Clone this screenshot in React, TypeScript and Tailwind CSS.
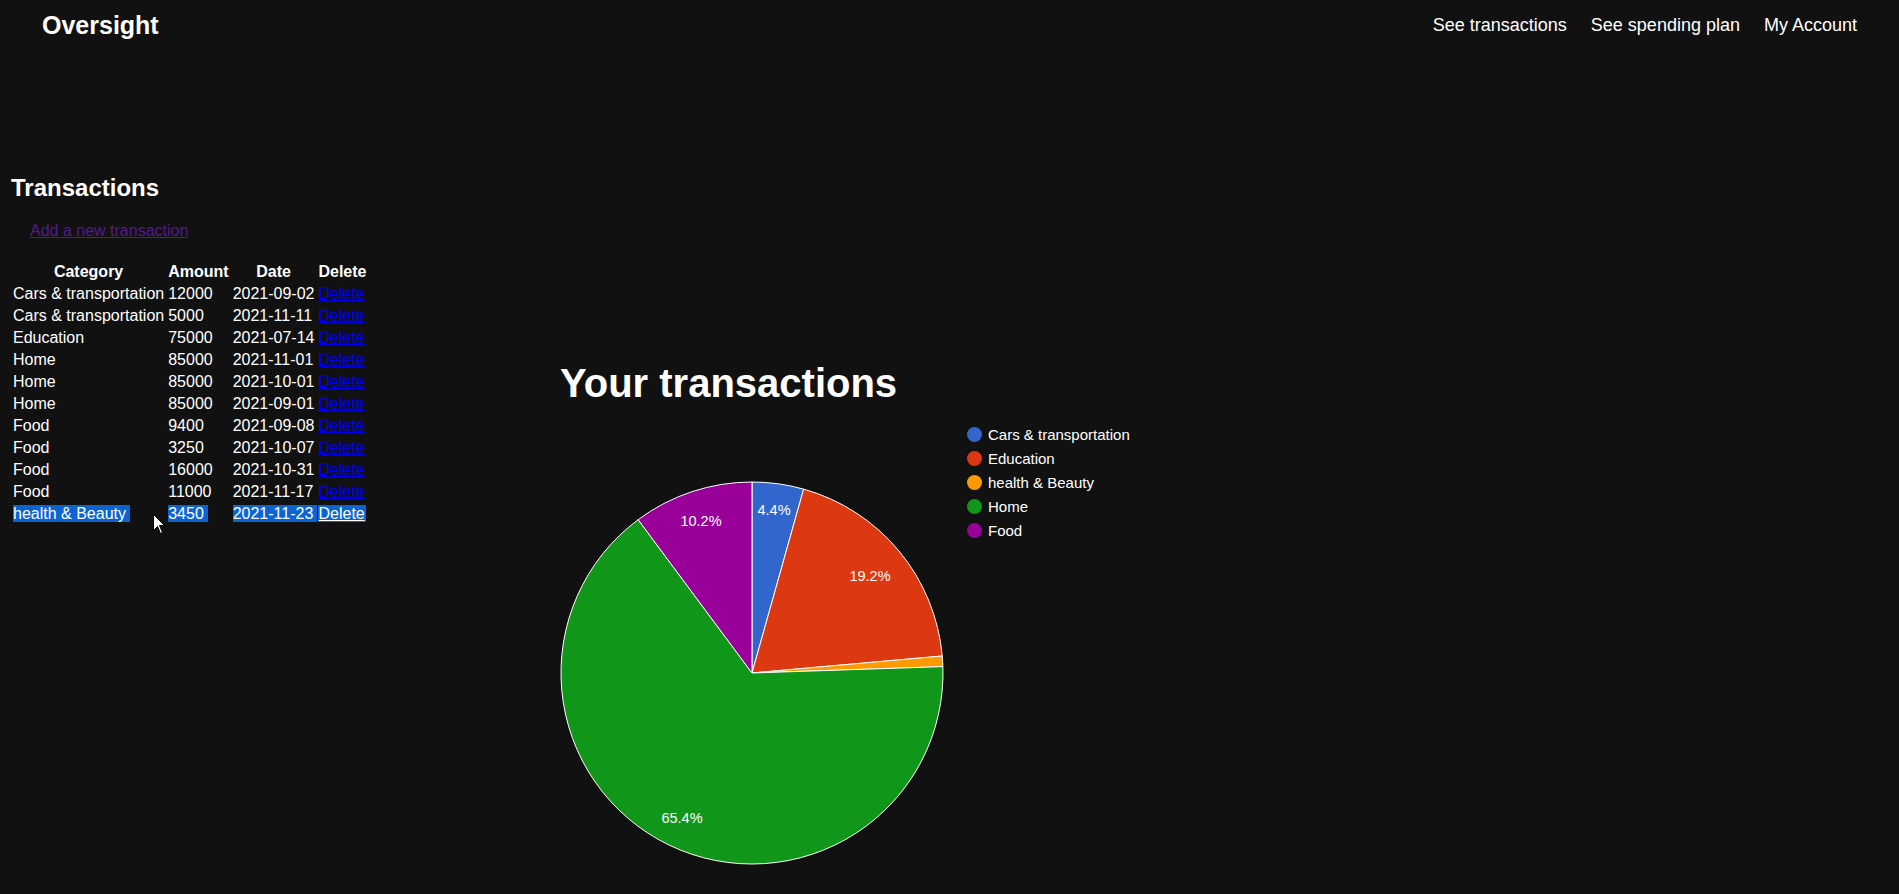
import React from 'react';

type Tx = { category: string; amount: number; date: string };

const transactions: Tx[] = [
  { category: 'Cars & transportation', amount: 12000, date: '2021-09-02' },
  { category: 'Cars & transportation', amount: 5000, date: '2021-11-11' },
  { category: 'Education', amount: 75000, date: '2021-07-14' },
  { category: 'Home', amount: 85000, date: '2021-11-01' },
  { category: 'Home', amount: 85000, date: '2021-10-01' },
  { category: 'Home', amount: 85000, date: '2021-09-01' },
  { category: 'Food', amount: 9400, date: '2021-09-08' },
  { category: 'Food', amount: 3250, date: '2021-10-07' },
  { category: 'Food', amount: 16000, date: '2021-10-31' },
  { category: 'Food', amount: 11000, date: '2021-11-17' },
];

const slices = [
  { name: 'Cars & transportation', color: '#3366cc' },
  { name: 'Education', color: '#dc3912' },
  { name: 'health & Beauty', color: '#ff9900' },
  { name: 'Home', color: '#109618' },
  { name: 'Food', color: '#990099' },
];

const allTx: Tx[] = [...transactions, { category: 'health & Beauty', amount: 3450, date: '2021-11-23' }];

// labels placed where the chart lib put them
const labels = [
  { text: '4.4%', x: 214, y: 95 },
  { text: '19.2%', x: 310, y: 161 },
  { text: '10.2%', x: 141, y: 106 },
  { text: '65.4%', x: 122, y: 403 },
];

function PieChart() {
  const cx = 192;
  const cy = 253;
  const r = 191;
  const totals = slices.map((s) =>
    allTx.filter((t) => t.category === s.name).reduce((sum, t) => sum + t.amount, 0)
  );
  const total = totals.reduce((a, b) => a + b, 0);
  let start = 0;
  const paths = slices.map((s, i) => {
    const a0 = (start / total) * Math.PI * 2;
    start += totals[i];
    const a1 = (start / total) * Math.PI * 2;
    const x0 = cx + r * Math.sin(a0);
    const y0 = cy - r * Math.cos(a0);
    const x1 = cx + r * Math.sin(a1);
    const y1 = cy - r * Math.cos(a1);
    const large = a1 - a0 > Math.PI ? 1 : 0;
    return {
      d: `M${cx},${cy} L${x0},${y0} A${r},${r} 0 ${large} 1 ${x1},${y1} Z`,
      color: s.color,
    };
  });

  return (
    <svg width={600} height={450} className="block">
      {paths.map((p, i) => (
        <path key={i} d={p.d} fill={p.color} stroke="#ffffff" strokeWidth={1} />
      ))}
      {labels.map((l) => (
        <text
          key={l.text}
          x={l.x}
          y={l.y}
          textAnchor="middle"
          fill="#ffffff"
          fontSize={14.5}
          fontFamily="'Liberation Sans', Arial, sans-serif"
        >
          {l.text}
        </text>
      ))}
      {slices.map((s, i) => (
        <g key={s.name}>
          <circle cx={414.5} cy={14.5 + i * 24} r={7.5} fill={s.color} />
          <text
            x={428}
            y={20 + i * 24}
            fill="#ffffff"
            fontSize={15}
            fontFamily="'Liberation Sans', Arial, sans-serif"
          >
            {s.name}
          </text>
        </g>
      ))}
    </svg>
  );
}

export default function App() {
  return (
    <div className="relative min-h-[894px] bg-[#111111] text-white leading-[normal] font-['Liberation_Sans',Arial,sans-serif]">
      <header className="flex h-[50px] items-center justify-between pl-[42px] pr-[42px]">
        <div className="text-[25px] font-bold">Oversight</div>
        <nav className="flex gap-6 text-[18px]">
          <a href="#">See transactions</a>
          <a href="#">See spending plan</a>
          <a href="#">My Account</a>
        </nav>
      </header>

      <main className="flex items-start pl-[10px] pt-[124px]">
        <div className="w-[550px]">
          <h2 className="mb-[20px] ml-px text-[24px] font-bold">Transactions</h2>
          <a href="#" className="ml-[20px] text-[16px] text-[#551a8b] underline">
            Add a new transaction
          </a>
          <table className="mt-[20px] border-separate border-spacing-[2px] text-[16px]">
            <thead>
              <tr>
                <th className="p-px text-center font-bold">Category</th>
                <th className="p-px text-center font-bold">Amount</th>
                <th className="p-px text-center font-bold">Date</th>
                <th className="p-px text-center font-bold">Delete</th>
              </tr>
            </thead>
            <tbody>
              {transactions.map((t, i) => (
                <tr key={i}>
                  <td className="p-px">{t.category}</td>
                  <td className="p-px">{t.amount}</td>
                  <td className="p-px">{t.date}</td>
                  <td className="p-px">
                    <a href="#" className="text-[#0000ee] underline">Delete</a>
                  </td>
                </tr>
              ))}
              <tr>
                <td className="p-px">
                  <span className="bg-[#0b64d2] pr-[4px]">health &amp; Beauty</span>
                </td>
                <td className="p-px">
                  <span className="bg-[#0b64d2] pr-[4px]">3450</span>
                </td>
                <td className="p-px">
                  <span className="bg-[#0b64d2] pr-[4px] mr-[-4px]">2021-11-23</span>
                </td>
                <td className="p-px">
                  <a href="#" className="bg-[#0b64d2] pr-px text-white underline">Delete</a>
                </td>
              </tr>
            </tbody>
          </table>
        </div>

        <div className="mt-[186px]">
          <h1 className="text-[40px] font-bold leading-[46px]">Your transactions</h1>
          <div className="mt-[14px]">
            <PieChart />
          </div>
        </div>
      </main>

      <svg className="absolute left-[153px] top-[514px]" width={13} height={21} viewBox="0 0 13 21">
        <path d="M0.5,0.5 L0.5,16.5 L4.5,12.5 L7.5,19.5 L9.5,18.5 L6.5,11.5 L11.5,11.5 Z" fill="#ffffff" stroke="#000000" strokeWidth={1} />
      </svg>
    </div>
  );
}
